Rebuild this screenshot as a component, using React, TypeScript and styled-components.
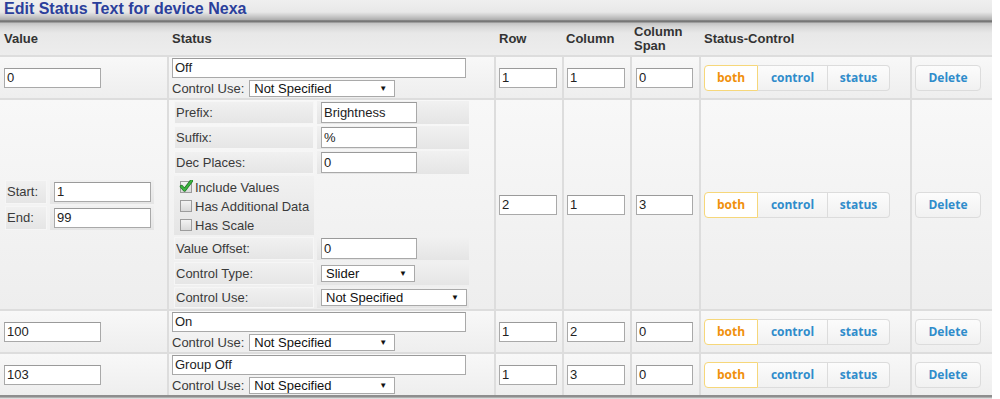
import React from 'react';
import styled, { createGlobalStyle } from 'styled-components';

const GlobalStyle = createGlobalStyle`
  body {
    margin: 0;
    background: #ffffff;
    font-family: "Liberation Sans", Arial, sans-serif;
    color: #3a3a3a;
  }
`;

const COLUMNS = '167px 325px 66px 66px 67px 209px 80px';

const Page = styled.div`
  width: 992px;
`;

const TitleBar = styled.div`
  height: 20px;
  line-height: 18px;
  padding-left: 4px;
  font-size: 16px;
  font-weight: bold;
  color: #2b3f9b;
  background: linear-gradient(#efefef 0, #e8e8e8 60%, #c4c4c4 85%, #acacac 100%);
`;

const Rule = styled.div`
  height: 3px;
  background: linear-gradient(#8a8a8a, #6e6e6e 70%, #d6d6d6);
`;

const HeaderRow = styled.div`
  display: grid;
  grid-template-columns: ${COLUMNS};
  column-gap: 2px;
  height: 32px;
  align-items: center;
  font-size: 13px;
  font-weight: bold;
  color: #333;
  background: linear-gradient(#c2c2c2 0, #d8d8d8 4px, #e8e8e8 10px, #ededed 100%);
`;

const HeadCell = styled.div<{ $pad?: number }>`
  padding-left: ${(p) => p.$pad ?? 3}px;
  line-height: 14px;
`;

const Body = styled.div`
  display: grid;
  grid-template-columns: ${COLUMNS};
  gap: 2px;
  padding-top: 2px;
  background: #dddddd;
`;

const Cell = styled.div<{ $pad?: number }>`
  display: flex;
  align-items: center;
  padding: 1px 0 1px ${(p) => p.$pad ?? 3}px;
  background: linear-gradient(#f8f8f8, #eeeeee);
`;

const Footer = styled.div`
  height: 5px;
  background: linear-gradient(#8e8e8e 0, #8e8e8e 2px, #d2d2d2 3px, #ffffff 100%);
`;

const TextInput = styled.div<{ $w: number; $h?: number }>`
  box-sizing: border-box;
  width: ${(p) => p.$w}px;
  height: ${(p) => p.$h ?? 20}px;
  padding-left: 2px;
  border: 1px solid #a9a9a9;
  border-top-color: #9a9a9a;
  background: #fff;
  font-size: 13px;
  line-height: ${(p) => (p.$h ?? 20) - 2}px;
  color: #222;
  white-space: nowrap;
`;

const SelectBox = styled.div<{ $w: number }>`
  box-sizing: border-box;
  width: ${(p) => p.$w}px;
  height: 17px;
  display: flex;
  align-items: center;
  justify-content: space-between;
  padding: 0 7px 0 4px;
  border: 1px solid #a9a9a9;
  background: #fff;
  font-size: 13px;
  line-height: 15px;
  color: #111;
  white-space: nowrap;
`;

const Arrow = styled.span`
  font-size: 8px;
  color: #111;
`;

const StatusStack = styled.div`
  display: flex;
  flex-direction: column;
  gap: 2px;
  align-self: flex-start;
`;

const UseRow = styled.div`
  display: flex;
  align-items: center;
  gap: 5px;
  height: 17px;
  font-size: 13px;
`;

const Nested = styled.div<{ $cols: string }>`
  display: grid;
  grid-template-columns: ${(p) => p.$cols};
  column-gap: 3px;
  row-gap: 2px;
`;

const NLabel = styled.div<{ $h?: number }>`
  display: flex;
  align-items: center;
  height: ${(p) => p.$h ?? 23}px;
  padding-left: 2px;
  font-size: 13px;
  background: linear-gradient(#f1f1f1, #e5e5e5);
  box-shadow: inset 0 0 0 1px #f6f6f6;
`;

const NValue = styled.div<{ $empty?: boolean }>`
  display: flex;
  align-items: center;
  padding-left: 4px;
  background: ${(p) => (p.$empty ? 'transparent' : 'linear-gradient(#f1f1f1, #e5e5e5)')};
`;

const CheckList = styled.div`
  grid-column: 1;
  display: flex;
  flex-direction: column;
  justify-content: center;
  height: 59px;
  padding: 1px 0 0 5px;
  box-sizing: border-box;
  font-size: 13px;
  background: linear-gradient(#f1f1f1, #e5e5e5);
`;

const CheckItem = styled.div`
  display: flex;
  align-items: center;
  gap: 2px;
  height: 19px;
`;

const Buttons = styled.div`
  display: flex;
  font-family: "Open Sans", "DejaVu Sans", sans-serif;
  font-size: 12px;
  font-weight: bold;
`;

const SegButton = styled.div<{ $active?: boolean; $w: number; $first?: boolean; $last?: boolean }>`
  box-sizing: border-box;
  width: ${(p) => p.$w}px;
  height: 26px;
  display: flex;
  align-items: center;
  justify-content: center;
  border: 1px solid ${(p) => (p.$active ? '#f6d77a' : '#dcdcdc')};
  border-left-width: ${(p) => (p.$first ? 1 : 0)}px;
  border-radius: ${(p) => (p.$first ? '4px 0 0 4px' : p.$last ? '0 4px 4px 0' : '0')};
  background: ${(p) => (p.$active ? '#ffffff' : 'linear-gradient(#fcfcfc, #f1f1f1)')};
  color: ${(p) => (p.$active ? '#f0900c' : '#2f8ccb')};
`;

const DeleteButton = styled.div`
  box-sizing: border-box;
  width: 66px;
  height: 26px;
  display: flex;
  align-items: center;
  justify-content: center;
  border: 1px solid #dcdcdc;
  border-radius: 4px;
  background: linear-gradient(#fcfcfc, #f1f1f1);
  font-family: "Open Sans", "DejaVu Sans", sans-serif;
  font-size: 12px;
  font-weight: bold;
  color: #2f8ccb;
`;

const CheckBox = ({ checked }: { checked?: boolean }) => (
  <svg width="14" height="14" viewBox="0 0 14 14">
    <defs>
      <linearGradient id="cbg" x1="0" y1="0" x2="0" y2="1">
        <stop offset="0" stopColor="#f4f4f4" />
        <stop offset="1" stopColor="#d8d8d8" />
      </linearGradient>
    </defs>
    <rect x="1.5" y="1.5" width="11" height="11" fill="url(#cbg)" stroke="#9c9c9c" />
    {checked && (
      <>
        <path d="M2.5 6.5 L5.5 10 L12.5 0.8" fill="none" stroke="#1f6e25" strokeWidth="3.4" strokeLinecap="round" strokeLinejoin="round" />
        <path d="M2.5 6.5 L5.5 10 L12.5 0.8" fill="none" stroke="#3cb43f" strokeWidth="2" strokeLinecap="round" strokeLinejoin="round" />
      </>
    )}
  </svg>
);

const Select = ({ value, w }: { value: string; w: number }) => (
  <SelectBox $w={w}>
    <span>{value}</span>
    <Arrow>▼</Arrow>
  </SelectBox>
);

const StatusButtons = () => (
  <Buttons>
    <SegButton $active $first $w={54}>both</SegButton>
    <SegButton $w={70}>control</SegButton>
    <SegButton $last $w={62}>status</SegButton>
  </Buttons>
);

interface SimpleRow {
  value: string;
  status: string;
  row: string;
  column: string;
  span: string;
}

const simpleRows: SimpleRow[] = [
  { value: '0', status: 'Off', row: '1', column: '1', span: '0' },
  { value: '100', status: 'On', row: '1', column: '2', span: '0' },
  { value: '103', status: 'Group Off', row: '1', column: '3', span: '0' },
];

const TailCells = ({ row, column, span }: { row: string; column: string; span: string }) => (
  <>
    <Cell><TextInput $w={58}>{row}</TextInput></Cell>
    <Cell><TextInput $w={58}>{column}</TextInput></Cell>
    <Cell $pad={4}><TextInput $w={57}>{span}</TextInput></Cell>
    <Cell><StatusButtons /></Cell>
    <Cell><DeleteButton>Delete</DeleteButton></Cell>
  </>
);

const Simple = ({ r }: { r: SimpleRow }) => (
  <>
    <Cell $pad={4}><TextInput $w={97}>{r.value}</TextInput></Cell>
    <Cell>
      <StatusStack>
        <TextInput $w={294}>{r.status}</TextInput>
        <UseRow>
          Control Use:
          <Select value="Not Specified" w={146} />
        </UseRow>
      </StatusStack>
    </Cell>
    <TailCells row={r.row} column={r.column} span={r.span} />
  </>
);

const RangeRow = () => (
  <>
    <Cell $pad={5}>
      <Nested $cols="42px 104px">
        <NLabel $h={24}>Start:</NLabel>
        <NValue><TextInput $w={97}>1</TextInput></NValue>
        <NLabel $h={24}>End:</NLabel>
        <NValue><TextInput $w={97}>99</TextInput></NValue>
      </Nested>
    </Cell>
    <Cell $pad={5}>
      <Nested $cols="140px 152px">
        <NLabel>Prefix:</NLabel>
        <NValue><TextInput $w={96} $h={21}>Brightness</TextInput></NValue>
        <NLabel>Suffix:</NLabel>
        <NValue><TextInput $w={96} $h={21}>%</TextInput></NValue>
        <NLabel>Dec Places:</NLabel>
        <NValue><TextInput $w={96} $h={21}>0</TextInput></NValue>
        <CheckList>
          <CheckItem><CheckBox checked />Include Values</CheckItem>
          <CheckItem><CheckBox />Has Additional Data</CheckItem>
          <CheckItem><CheckBox />Has Scale</CheckItem>
        </CheckList>
        <NValue $empty />
        <NLabel>Value Offset:</NLabel>
        <NValue><TextInput $w={96} $h={21}>0</TextInput></NValue>
        <NLabel>Control Type:</NLabel>
        <NValue><Select value="Slider" w={94} /></NValue>
        <NLabel $h={21}>Control Use:</NLabel>
        <NValue><Select value="Not Specified" w={146} /></NValue>
      </Nested>
    </Cell>
    <TailCells row="2" column="1" span="3" />
  </>
);

export default function App() {
  return (
    <Page>
      <GlobalStyle />
      <TitleBar>Edit Status Text for device Nexa</TitleBar>
      <Rule />
      <HeaderRow>
        <HeadCell $pad={4}>Value</HeadCell>
        <HeadCell>Status</HeadCell>
        <HeadCell>Row</HeadCell>
        <HeadCell $pad={2}>Column</HeadCell>
        <HeadCell $pad={2}>Column<br />Span</HeadCell>
        <HeadCell>Status-Control</HeadCell>
        <HeadCell />
      </HeaderRow>
      <Body>
        <Simple r={simpleRows[0]} />
        <RangeRow />
        <Simple r={simpleRows[1]} />
        <Simple r={simpleRows[2]} />
      </Body>
      <Footer />
    </Page>
  );
}
